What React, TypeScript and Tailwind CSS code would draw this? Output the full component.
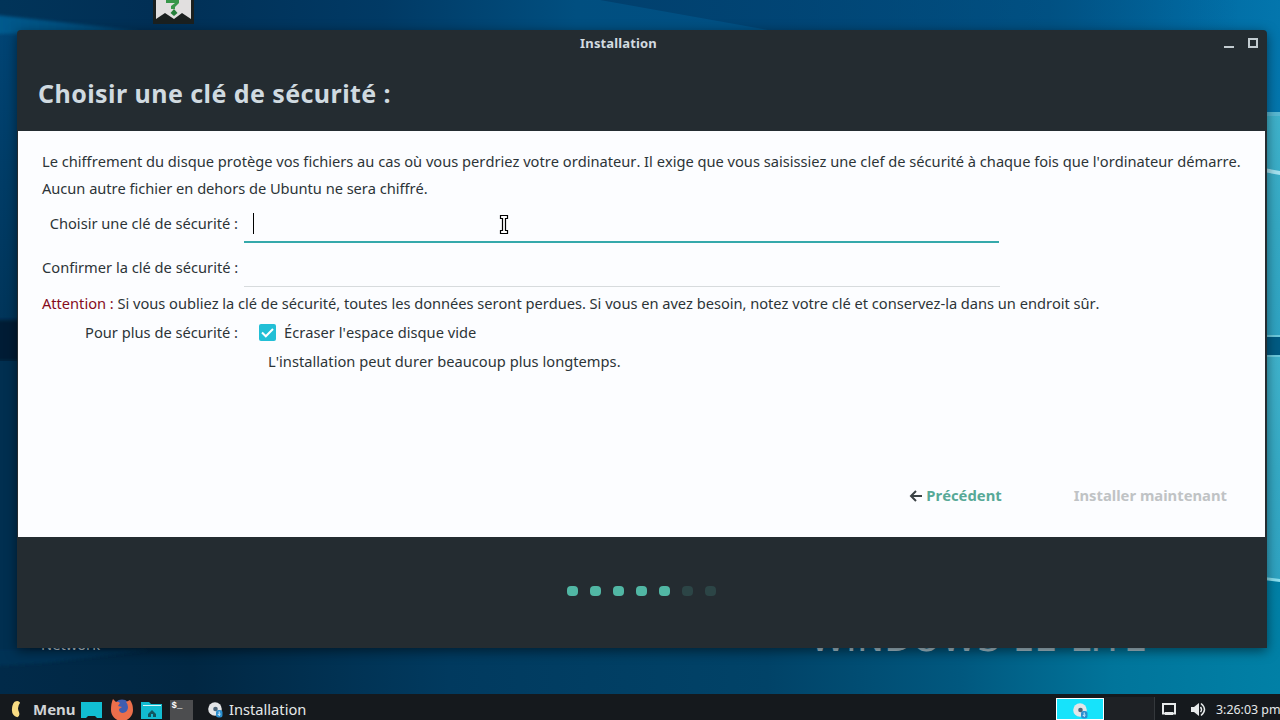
import type { ReactNode } from 'react';

const STEPS = [true, true, true, true, true, false, false];

function Wallpaper() {
  return (
    <svg className="absolute inset-0" width="1280" height="720" viewBox="0 0 1280 720">
      <defs>
        <linearGradient id="top" x1="0" x2="1" y1="0" y2="0">
          <stop offset="0" stopColor="#013459" />
          <stop offset="0.12" stopColor="#012f55" />
          <stop offset="0.3" stopColor="#013a65" />
          <stop offset="0.45" stopColor="#014f80" />
          <stop offset="0.6" stopColor="#015084" />
          <stop offset="0.82" stopColor="#01588c" />
          <stop offset="0.93" stopColor="#016aa2" />
          <stop offset="1" stopColor="#0376ad" />
        </linearGradient>
        <linearGradient id="bottom" x1="0" x2="1" y1="0" y2="0">
          <stop offset="0" stopColor="#012a49" />
          <stop offset="0.15" stopColor="#012743" />
          <stop offset="0.35" stopColor="#013a5f" />
          <stop offset="0.6" stopColor="#014368" />
          <stop offset="0.75" stopColor="#01587f" />
          <stop offset="0.87" stopColor="#01759b" />
          <stop offset="1" stopColor="#0180a6" />
        </linearGradient>
        <linearGradient id="left" x1="0" x2="0" y1="0" y2="1">
          <stop offset="0" stopColor="#014474" />
          <stop offset="1" stopColor="#01355a" />
        </linearGradient>
        <linearGradient id="pane" x1="0" x2="0" y1="0" y2="1">
          <stop offset="0" stopColor="#3fb2cb" />
          <stop offset="0.5" stopColor="#35a9c4" />
          <stop offset="1" stopColor="#2fa3c2" />
        </linearGradient>
        <linearGradient id="beam" x1="0" x2="1" y1="0" y2="0">
          <stop offset="0" stopColor="#055a8e" />
          <stop offset="1" stopColor="#055a8e" stopOpacity="0.4" />
        </linearGradient>
        <linearGradient id="shade" x1="0" x2="1" y1="0" y2="0">
          <stop offset="0" stopColor="#01406e" />
          <stop offset="1" stopColor="#01406e" stopOpacity="0" />
        </linearGradient>
        <filter id="soft">
          <feGaussianBlur stdDeviation="1.5" />
        </filter>
      </defs>
      <rect width="1280" height="360" fill="url(#top)" />
      <rect y="360" width="1280" height="360" fill="url(#bottom)" />
      <path d="M600 0 H1240 V34 H790 Z" fill="url(#shade)" />
      <rect y="30" width="30" height="290" fill="url(#left)" />
      <path d="M-4 15 L60 22 L140 31 L-4 34 Z" fill="url(#beam)" filter="url(#soft)" />
      <rect x="-4" y="320" width="34" height="41" fill="#011b35" filter="url(#soft)" />
      <rect y="361" width="30" height="296" fill="#012f50" />
      <path d="M-4 650 H150 L45 663 L-4 666 Z" fill="#013354" filter="url(#soft)" />
      <rect x="1264" y="112" width="16" height="225" fill="url(#pane)" />
      <rect x="1264" y="112" width="16" height="4" fill="#59b9d3" />
      <path d="M1264 168 L1280 171 V175 L1264 172 Z" fill="#a5e2f0" />
      <rect x="1264" y="335" width="16" height="2" fill="#6cc9dc" />
      <rect x="1264" y="337" width="16" height="18" fill="#015b83" />
      <rect x="1264" y="355" width="16" height="225" fill="url(#pane)" />
      <rect x="1264" y="355" width="16" height="2" fill="#6cc9dc" />
      <path d="M1264 577 L1280 579 V582 L1264 580 Z" fill="#8be0ef" />
    </svg>
  );
}

function DiscIcon() {
  return (
    <svg width="16" height="16" viewBox="0 0 16 16">
      <circle cx="7" cy="7" r="6.8" fill="#e4e6e8" />
      <circle cx="7.500" cy="7" r="2.300" fill="#4b6478" />
      <rect x="8" y="8" width="6.500" height="7.500" rx="2.500" fill="#2a8fd0" />
      <path d="M11.200 9.500v4M9.800 12l1.400 1.400 1.400-1.400" stroke="#d8eefb" fill="none" />
    </svg>
  );
}

function FirefoxIcon() {
  return (
    <svg width="24" height="24" viewBox="0 0 24 24">
      <circle cx="12" cy="10" r="8.5" fill="#3e5db0" />
      <path
        d="M3 1 L6 4 Q8 3 10 5 L8 8 L12 9 L9 11 Q9 15 13 15 Q18 14 18 9 Q18 6 16 4 L20 2 Q23 6 23 12 A11 11 0 1 1 1 12 Q1 5 3 1Z"
        fill="#ec6f4b"
      />
    </svg>
  );
}

function TextCursor() {
  return (
    <svg className="absolute top-[214px] left-[499px]" width="10" height="21" viewBox="0 0 10 21">
      <path
        d="M1.500 1.500h7v3h-2v12h2v3h-7v-3h2v-12h-2z"
        fill="#fff"
        stroke="#000"
        strokeWidth="1.200"
      />
    </svg>
  );
}

function Label({ children }: { children: ReactNode }) {
  return <span className="mb-[2px] w-[202px] shrink-0 pr-[6px] text-right whitespace-nowrap">{children}</span>;
}

function TitleBar() {
  return (
    <div className="flex h-[27px] items-center pr-[9px]">
      <span className="mr-1 flex-1 text-center text-[13px] font-bold tracking-[0.14px] text-[#d3dbe0]">
        Installation
      </span>
      <svg className="mb-[2px]" width="34" height="12" viewBox="0 0 34 12" fill="none" stroke="#c3ccd1" strokeWidth="2">
        <path d="M0 10h10" />
        <rect x="25" y="2" width="8" height="8" />
      </svg>
    </div>
  );
}

function InstallerWindow() {
  return (
    <div className="absolute top-[30px] left-[17px] flex h-[618px] w-[1250px] flex-col rounded-t-sm bg-[#242c31] shadow-[0_3px_12px_rgba(0,0,0,0.5)]">
      <TitleBar />
      <h1 className="h-[74px] pl-[21px] text-[25px] leading-[73px] font-bold tracking-[0.43px] text-[#d0dae0]">
        Choisir une clé de sécurité :
      </h1>

      <main className="mr-[2px] ml-px flex h-[406px] flex-col bg-[#fcfdff] pl-6 text-[14.67px] text-[#2c3437] [font-kerning:none]">
        <p className="mt-[17px] leading-[27px] tracking-[-0.01px] whitespace-nowrap">
          Le chiffrement du disque protège vos fichiers au cas où vous perdriez votre ordinateur. Il exige que
          vous saisissiez une clef de sécurité à chaque fois que l'ordinateur démarre.
          <br />
          <span className="tracking-[-0.04px]">Aucun autre fichier en dehors de Ubuntu ne sera chiffré.</span>
        </p>
        <div className="mt-[3px] flex h-[38px] items-center">
          <Label>Choisir une clé de sécurité :</Label>
          <div className="flex h-[38px] w-[755px] items-center border-b-2 border-[#35a9ab] pl-[9px]">
            <span className="h-[21px] w-px bg-black" />
          </div>
        </div>
        <div className="mt-[5px] flex h-[39px] items-center">
          <Label>Confirmer la clé de sécurité :</Label>
          <div className="h-[39px] w-[756px] border-b border-[#d7dbdd]" />
        </div>
        <p className="mt-[2px] h-[29px] leading-[29px] tracking-[-0.03px] whitespace-nowrap">
          <span className="text-[#860b1c]">Attention :</span> Si vous oubliez la clé de sécurité, toutes les
          données seront perdues. Si vous en avez besoin, notez votre clé et conservez-la dans un endroit sûr.
        </p>
        <div className="flex h-[29px] items-center">
          <Label>Pour plus de sécurité :</Label>
          <span className="ml-[15px] flex h-[17px] w-[17px] items-center justify-center rounded-[2px] bg-[#22bfd6]">
            <svg width="13" height="10" viewBox="0 0 13 10" fill="none" stroke="#fff" strokeWidth="2">
              <path d="M1 4.500 L4.800 8.300 L12 1" />
            </svg>
          </span>
          <span className="mb-[2px] ml-2 tracking-[0.02px]">Écraser l'espace disque vide</span>
        </div>
        <p className="h-[29px] pl-[226px] leading-[29px] tracking-[0.02px]">
          L'installation peut durer beaucoup plus longtemps.
        </p>
        <div className="mt-auto mr-[38px] mb-[26px] flex h-8 items-center justify-end text-[14.8px] font-bold">
          <svg className="mt-px mr-1" width="13" height="12" viewBox="0 0 13 12" fill="none" stroke="#3b4245" strokeWidth="2">
            <path d="M13 6H1.500M7 1L2 6L7 11" />
          </svg>
          <span className="text-[#57a997]">Précédent</span>
          <span className="ml-[72px] text-[#c0c3c5]">Installer maintenant</span>
        </div>
      </main>

      <footer className="flex flex-1 justify-center gap-3 pt-[49px] pr-[2px]">
        {STEPS.map((done, i) => (
          <span
            key={i}
            className={`h-[10px] w-[11px] rounded-[4px] ${done ? 'bg-[#51b7a4]' : 'bg-[#2c4546]'}`}
          />
        ))}
      </footer>
    </div>
  );
}

function Taskbar() {
  return (
    <div className="absolute bottom-0 left-0 flex h-[26px] w-full items-center overflow-hidden bg-[#15191d] pt-1 text-[14.67px] text-[#e6e9ea]">
      <svg className="ml-[11px]" width="10" height="18" viewBox="0 0 11 18">
        <path d="M4 1 Q8 -1 10 2 Q6 7 9 13 Q10 17 7 18 Q1 16 1 10 Q1 4 4 1Z" fill="#f8dc83" />
      </svg>
      <span className="ml-3 w-[48px] text-[15px] font-bold text-[#d0d3d5]">Menu</span>
      <svg className="mt-[2px]" width="21" height="16" viewBox="0 0 21 16">
        <path d="M0 0h21v16h-5l-2-2H7l-2 2H0z" fill="#11bed2" />
      </svg>
      <span className="mt-[2px] ml-2"><FirefoxIcon /></span>
      <svg className="mt-[2px] ml-[7px]" width="21" height="17" viewBox="0 0 21 17">
        <path d="M0 0h8l2 2h11v15H0z" fill="#12bcd0" />
        <path d="M2 3.500h18" stroke="#d7f6f8" />
        <path d="M7 12l4-4 4 4v3h-3v-3h-2v3H7z" fill="#12565f" />
      </svg>
      <svg className="mt-[3px] ml-2" width="23" height="21" viewBox="0 0 23 21">
        <rect width="23" height="21" fill="#4c4d4f" />
        <text x="1.5" y="8" fontSize="9" fontWeight="bold" fill="#fff" fontFamily="Liberation Mono, monospace">
          $_
        </text>
      </svg>
      <span className="mt-px ml-[15px]"><DiscIcon /></span>
      <span className="ml-[5px]">Installation</span>
      <div className="mr-px ml-auto flex h-[22px] w-[48px] shrink-0 items-start justify-center border border-white bg-[#16e3fb] pt-1 pl-[2px]">
        <DiscIcon />
      </div>
      <div className="h-[24px] w-[50px] shrink-0 border-r border-[#34383c] bg-[#1e2125]" />
      <svg className="mt-px ml-[7px] shrink-0" width="14" height="13" viewBox="0 0 14 13">
        <path d="M1 1h12v9.500H1z" fill="none" stroke="#e6e9ea" strokeWidth="2" />
        <path d="M3 9h8v3H3z" fill="#e6e9ea" />
      </svg>
      <svg className="ml-[15px] shrink-0" width="15" height="15" viewBox="0 0 15 15">
        <path d="M0 5h3l5-4v13l-5-4H0z" fill="#e6e9ea" />
        <path d="M9.500 5q2 2.500 0 5M10 1.500q7 6 0 12" fill="none" stroke="#e6e9ea" strokeWidth="1.500" />
      </svg>
      <span className="mt-[2px] ml-[10px] w-[64px] shrink-0 text-[12.4px] whitespace-nowrap">3:26:03 pm</span>
    </div>
  );
}

export default function App() {
  return (
    <div className="relative h-[720px] w-[1280px] overflow-hidden bg-[#012f55] font-['Noto_Sans',sans-serif]">
      <Wallpaper />
      <svg className="absolute top-0 left-[153px]" width="41" height="24" viewBox="0 0 41 24">
        <rect width="41" height="24" fill="#1b201f" />
        <path d="M3 0h35v19l-9-6-8 6-9-6-9 6z" fill="#e1dfdf" />
        <path d="M13 0h13v3l-4 4v2h-4V6l4-3h-9z" fill="#38974a" />
        <path d="M21 9l3.500 4-3.500 3-3.500-3z" fill="#267f3b" />
      </svg>
      <span className="absolute top-[634px] left-[41px] text-[14.67px] leading-5 text-[#c5d0d6]">Network</span>
      <span className="absolute top-[615px] left-[810px] font-['DejaVu_Sans',sans-serif] text-[36px] leading-[48px] tracking-[0.35px] whitespace-nowrap text-[#a8c3cf]">
        WINDOWS 12 LITE
      </span>
      <InstallerWindow />
      <Taskbar />
      <TextCursor />
    </div>
  );
}
